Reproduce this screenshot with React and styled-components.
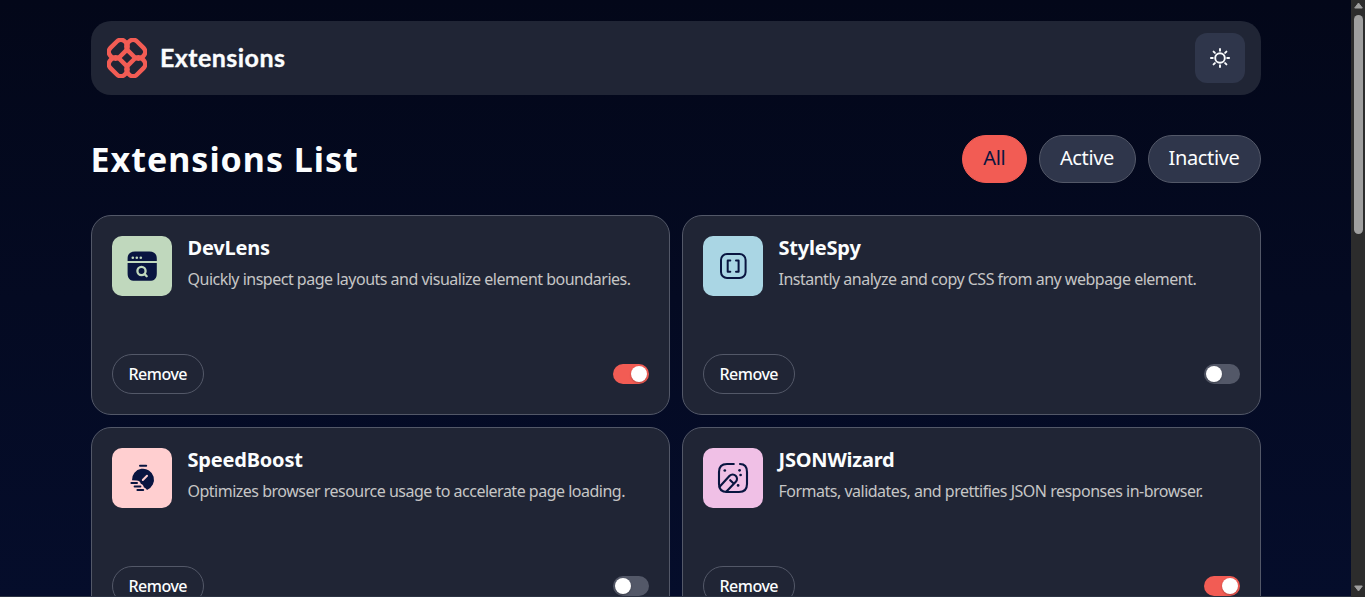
import React from "react";
import styled, { createGlobalStyle } from "styled-components";

const GlobalStyle = createGlobalStyle`
  *, *::before, *::after { box-sizing: border-box; }
  body {
    margin: 0;
    overflow: hidden;
    font-family: "Noto Sans", sans-serif;
    color: #fbfdfe;
  }
  button { font: inherit; color: inherit; cursor: pointer; }
`;

const Viewport = styled.div`
  display: flex;
  height: 597px;
  overflow: hidden;
  background: #05091a;
`;

const Page = styled.main`
  flex: 1;
  min-width: 0;
  padding: 21px 90px 0 91px;
  overflow: hidden;
  background: linear-gradient(180deg, #030719 0, #050d2b 597px);
  border-bottom: 1px solid #2b3242;
`;

const Header = styled.header`
  display: flex;
  align-items: center;
  justify-content: space-between;
  height: 74px;
  padding: 0 16px;
  border-radius: 20px;
  background: #202535;
`;

const Brand = styled.div`
  display: flex;
  align-items: center;
  gap: 13px;
`;

const Wordmark = styled.span`
  margin-top: -2px;
  font-family: Lato, "Open Sans", sans-serif;
  font-size: 25px;
  line-height: 30px;
  font-weight: 700;
  letter-spacing: 0.45px;
  -webkit-text-stroke: 0.35px #fbfdfe;
`;

const ThemeButton = styled.button`
  display: grid;
  place-items: center;
  width: 50px;
  height: 50px;
  padding: 0;
  border: 0;
  border-radius: 12px;
  background: #2f364b;
`;

const Toolbar = styled.div`
  display: flex;
  align-items: center;
  justify-content: space-between;
  margin-top: 40px;
  height: 48px;
`;

const Title = styled.h1`
  margin: 0 0 0 -0.5px;
  font-size: 34px;
  line-height: 48px;
  font-weight: 700;
  letter-spacing: 1px;
`;

const Filters = styled.div`
  display: flex;
  gap: 12px;
`;

const FilterButton = styled.button`
  height: 48px;
  padding: 0 20.5px 3px 20px;
  border: 1px solid ${(p) => (p.$selected ? "#f25c54" : "#535868")};
  border-radius: 24px;
  background: ${(p) => (p.$selected ? "#f25c54" : "#2f364b")};
  color: ${(p) => (p.$selected ? "#091540" : "#fbfdfe")};
  font-size: 20px;
  letter-spacing: -0.35px;
`;

const Grid = styled.section`
  display: grid;
  grid-template-columns: 1fr 1fr;
  grid-auto-rows: 200px;
  gap: 12px;
  margin-top: 32px;
`;

const Card = styled.article`
  display: flex;
  flex-direction: column;
  justify-content: space-between;
  padding: 20px;
  border: 1px solid #535868;
  border-radius: 20px;
  background: #202535;
`;

const CardTop = styled.div`
  display: flex;
  gap: 15.5px;
`;

const IconTile = styled.div`
  width: 60px;
  height: 60px;
  border-radius: 10px;
  background: ${(p) => p.$tone};
  svg { display: block; }
`;

const Name = styled.h2`
  margin: -2px 0 0;
  font-size: 20px;
  line-height: 27px;
  font-weight: 700;
  letter-spacing: -0.2px;
`;

const Description = styled.p`
  margin: 7px 0 0;
  font-size: 16px;
  line-height: 22px;
  letter-spacing: -0.5px;
  color: #c6c6c6;
  white-space: nowrap;
`;

const CardBottom = styled.div`
  display: flex;
  align-items: center;
  justify-content: space-between;
`;

const RemoveButton = styled.button`
  height: 40px;
  padding: 0 15.5px;
  border: 1px solid #535868;
  border-radius: 20px;
  background: transparent;
  font-size: 16px;
  font-weight: 500;
  letter-spacing: -0.5px;
`;

const Switch = styled.button`
  display: flex;
  align-items: center;
  justify-content: ${(p) => (p.$on ? "flex-end" : "flex-start")};
  width: 36px;
  height: 20px;
  padding: 0 2px;
  border: 0;
  border-radius: 10px;
  background: ${(p) => (p.$on ? "#f25c54" : "#535868")};
`;

const Knob = styled.span`
  width: 16px;
  height: 16px;
  border-radius: 50%;
  background: #fff;
  box-shadow: 0 1px 2px rgba(0, 0, 0, 0.25);
`;

const ScrollTrack = styled.div`
  display: flex;
  flex-direction: column;
  align-items: center;
  width: 14px;
  background: #2c2c2c;
  padding-left: 1px;
`;

const ScrollArrow = styled.svg`
  flex: none;
  width: 11px;
  height: 15px;
  margin-top: ${(p) => (p.$end ? "auto" : "0")};
`;

const ScrollThumb = styled.div`
  width: 9px;
  height: 219px;
  border-radius: 4.5px;
  background: #9f9f9f;
`;

const ink = "#091540";

function Logo() {
  return (
    <svg width="40" height="40" viewBox="0 0 40 40" fill="none" stroke="#f25c54" strokeWidth="4.5">
      {[0, 90, 180, 270].map((a) => (
        <g key={a} transform={`rotate(${a} 20 20)`}>
          <rect x="1.1" y="4.8" width="20.3" height="12.9" rx="5.6" transform="rotate(-45 11.25 11.25)" />
        </g>
      ))}
    </svg>
  );
}

function Sun() {
  return (
    <svg width="22" height="22" viewBox="0 0 22 22" fill="none" stroke="#fbfdfe" strokeWidth="1.9" strokeLinecap="round">
      <circle cx="11" cy="11" r="4.8" />
      {[0, 45, 90, 135, 180, 225, 270, 315].map((a) => (
        <path key={a} d="M11 1.9v1.9" transform={`rotate(${a} 11 11)`} />
      ))}
    </svg>
  );
}

function LensIcon() {
  return (
    <svg width="60" height="60" viewBox="0 0 60 60">
      <path fill={ink} d="M15.6 25v-2.2c0-5 2.6-7.4 7.4-7.4h14.4c4.8 0 7.4 2.4 7.4 7.4V25zM15.6 27h29.2v10.4c0 5-2.4 7.4-7.4 7.4H23c-5 0-7.4-2.4-7.4-7.4z" />
      <g fill="#c0d8bd">
        <circle cx="20.8" cy="21.7" r="1.3" />
        <circle cx="24.8" cy="21.7" r="1.3" />
        <circle cx="28.8" cy="21.7" r="1.3" />
      </g>
      <g fill="none" stroke="#c0d8bd" strokeWidth="2.3" strokeLinecap="round">
        <circle cx="29.5" cy="35" r="4.1" />
        <path d="M32.6 38.1l2.1 2.1" />
      </g>
    </svg>
  );
}

function BracketsIcon() {
  return (
    <svg width="60" height="60" viewBox="0 0 60 60" fill="none" stroke={ink} strokeWidth="2" strokeLinecap="round" strokeLinejoin="round">
      <rect x="18" y="18" width="24.6" height="24" rx="6" />
      <path d="M27.3 24.4h-2.6v11.3h2.6M33 24.4h2.6v11.3H33" />
    </svg>
  );
}

function StopwatchIcon() {
  return (
    <svg width="60" height="60" viewBox="0 0 60 60">
      <path fill={ink} d="M20 32.200a11 11 0 1 1 15 9.700c-1-1.700-2-2.200-3.200-2.700c-.2-2-1.400-2.900-3-3.500c-.7-2.300-2-3.100-4.100-3.200z" />
      <g fill="none" stroke={ink} strokeWidth="2" strokeLinecap="round">
        <path d="M28 17.8h6.200M19.400 35h5.600M22.600 38.400h5.800M25.400 42.100h5.800" />
      </g>
      <path d="M30.8 32l4.2-4.2" fill="none" stroke="#ffcfd0" strokeWidth="2" strokeLinecap="round" />
    </svg>
  );
}

function WandIcon() {
  return (
    <svg width="60" height="60" viewBox="0 0 60 60" fill="none" stroke={ink} strokeWidth="2.1" strokeLinecap="round" strokeLinejoin="round">
      <path d="M30.8 16H24c-5.3 0-8 2.7-8 8v12c0 5.3 2.7 8 8 8h12c5.3 0 8-2.7 8-8V24c0-5.3-2.4-8-7-8" />
      <path d="M16.6 38.8l10-11a4.3 4.3 0 0 1 6.2 6L23.2 43.8M27.2 32.2l2.7 2.6" />
      <g fill={ink} stroke="none">
        <circle cx="21.8" cy="22.5" r="1.35" />
        <circle cx="36.6" cy="22.3" r="1.35" />
        <circle cx="37.6" cy="27" r="1.35" />
        <circle cx="35.1" cy="37.4" r="1.35" />
      </g>
    </svg>
  );
}

const extensions = [
  { name: "DevLens", text: "Quickly inspect page layouts and visualize element boundaries.", tone: "#c0d8bd", Icon: LensIcon, on: true },
  { name: "StyleSpy", text: "Instantly analyze and copy CSS from any webpage element.", tone: "#aad6e4", Icon: BracketsIcon, on: false },
  { name: "SpeedBoost", text: "Optimizes browser resource usage to accelerate page loading.", tone: "#ffcfd0", Icon: StopwatchIcon, on: false },
  { name: "JSONWizard", text: "Formats, validates, and prettifies JSON responses in-browser.", tone: "#f0c0e6", Icon: WandIcon, on: true },
];

export default function App() {
  return (
    <>
      <GlobalStyle />
      <Viewport>
        <Page>
          <Header>
            <Brand>
              <Logo />
              <Wordmark>Extensions</Wordmark>
            </Brand>
            <ThemeButton aria-label="Toggle theme"><Sun /></ThemeButton>
          </Header>
          <Toolbar>
            <Title>Extensions List</Title>
            <Filters>
              <FilterButton $selected>All</FilterButton>
              <FilterButton>Active</FilterButton>
              <FilterButton>Inactive</FilterButton>
            </Filters>
          </Toolbar>
          <Grid>
            {extensions.map(({ name, text, tone, Icon, on }) => (
              <Card key={name}>
                <CardTop>
                  <IconTile $tone={tone}><Icon /></IconTile>
                  <div>
                    <Name>{name}</Name>
                    <Description>{text}</Description>
                  </div>
                </CardTop>
                <CardBottom>
                  <RemoveButton>Remove</RemoveButton>
                  <Switch $on={on} role="switch" aria-checked={on} aria-label={name}><Knob /></Switch>
                </CardBottom>
              </Card>
            ))}
          </Grid>
        </Page>
        <ScrollTrack>
          <ScrollArrow viewBox="0 0 11 15"><path d="M5.5 3L9.3 8H1.7z" fill="#9f9f9f" stroke="#9f9f9f" strokeLinejoin="round" /></ScrollArrow>
          <ScrollThumb />
          <ScrollArrow $end viewBox="0 0 11 15"><path d="M5.5 9L9.3 4H1.7z" fill="#9f9f9f" stroke="#9f9f9f" strokeLinejoin="round" /></ScrollArrow>
        </ScrollTrack>
      </Viewport>
    </>
  );
}
